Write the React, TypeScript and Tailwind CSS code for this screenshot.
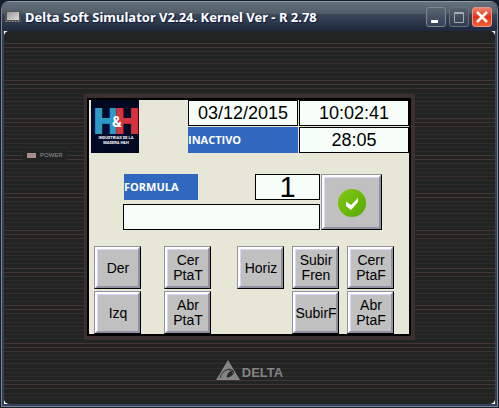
import type { ReactNode } from "react";

const stripes = [
  "bg-[#433635]", "bg-[#433635]", "bg-[#3a302e]", "bg-[#2c2b2a]", "bg-[#332c2b]",
  "bg-[#372e2c]", "bg-[#322c2a]", "bg-[#2c2b2a]", "bg-[#2d2b2b]",
];

function Stripes() {
  return (
    <div aria-hidden="true" className="absolute inset-x-0 top-3 bottom-1 overflow-hidden">
      {Array.from({ length: 90 }, (_, i) => (
        <div key={i} className={`h-px ${i % 6 === 5 ? "mb-1" : "mb-[3px]"} ${stripes[i % 9]}`} />
      ))}
    </div>
  );
}

function Key({ children, className = "" }: { children: ReactNode; className?: string }) {
  return (
    <button
      type="button"
      className={`flex shrink-0 border border-t-[#9292a0] border-l-[#9292a0] border-r-black border-b-black ${className}`}
    >
      <span className="flex grow self-stretch border-2 border-t-white border-l-white border-r-[#9090a2] border-b-[#9090a2]">
        <span className="flex w-0 grow items-center justify-center border-t border-l border-[#d6d6ff] bg-[#c0c0c0] text-center text-[14px] leading-[15px] whitespace-pre">
          {children}
        </span>
      </span>
    </button>
  );
}

function Logo() {
  return (
    <svg viewBox="0 0 48 53" className="h-[53px] w-12" role="img" aria-label="H&H">
      <defs>
        <radialGradient id="navy">
          <stop offset="0" stopColor="#02103a" />
          <stop offset="1" stopColor="#020820" />
        </radialGradient>
      </defs>
      <rect width="48" height="53" fill="url(#navy)" />
      <g fontFamily="Roboto, sans-serif" fontWeight="700" textAnchor="middle">
        <text x="15" y="33" fontSize="34" fill="#2d9ac8" stroke="#2d9ac8" strokeWidth="2">H</text>
        <text x="36" y="33" fontSize="34" fill="#d5333d" stroke="#d5333d" strokeWidth="2">H</text>
        <text x="26" y="27" fontSize="15" fill="#fff">&amp;</text>
        <text x="25" y="39" fontSize="4" fill="#fff">INDUSTRIAS DE LA</text>
        <text x="25" y="44" fontSize="4" fill="#fff">MADERA H&amp;H</text>
      </g>
    </svg>
  );
}

const frame = "h-[26px] border border-black bg-[#f7fdf8] text-center";
const label = "flex h-[26px] items-center bg-[#3068c0] text-[11px] font-bold text-white font-['Open_Sans',sans-serif]";

function Panel() {
  return (
    <section className="border-4 border-l-[3px] border-[#3b302f] bg-black p-[2px]">
      <div className="flex w-80 flex-col bg-[#e7e7d8] text-black">
        <header className="flex justify-between pl-[2px]">
          <Logo />
          <div className="grid grid-cols-[110px_110px] gap-px text-[18px] leading-6">
            <time className={frame}>03/12/2015</time>
            <time className={frame}>10:02:41</time>
            <div className={label}>INACTIVO</div>
            <output className={frame}>28:05</output>
          </div>
        </header>

        <form className="mt-[21px] mr-[27px] ml-[34px] flex gap-px">
          <div className="flex min-w-0 flex-1 flex-col gap-1">
            <div className="flex justify-between pl-px">
              <label htmlFor="formula" className={`${label} w-[74px]`}>FORMULA</label>
              <input id="formula" defaultValue="1" className={`${frame} w-[65px] text-[29px] leading-6`} />
            </div>
            <input aria-label="Nombre de la formula" className={`${frame} w-full`} />
          </div>
          <Key className="h-14 w-[61px]">
            <svg viewBox="0 0 28 28" className="size-7" role="img" aria-label="Aceptar">
              <defs>
                <linearGradient id="leaf" x2="1" y2="1">
                  <stop stopColor="#82c817" />
                  <stop offset="1" stopColor="#55aa00" />
                </linearGradient>
              </defs>
              <circle cx="14" cy="14" r="14" fill="url(#leaf)" />
              <path d="M8 12.500V17l5 4 7-8V9l-7 7z" fill="#fff" />
            </svg>
          </Key>
        </form>

        <div className="mt-4 ml-[5px] flex items-start">
          <div className="flex flex-col gap-[2px]">
            <Key className="h-[43px] w-[47px]">Der</Key>
            <Key className="h-[43px] w-[47px]">Izq</Key>
          </div>
          <div className="ml-[23px] flex flex-col gap-[2px]">
            <Key className="h-[43px] w-[47px]">{"Cer\nPtaT"}</Key>
            <Key className="h-[43px] w-[47px]">{"Abr\nPtaT"}</Key>
          </div>
          <Key className="ml-[26px] h-[43px] w-[47px]">Horiz</Key>
          <div className="ml-2 flex flex-col gap-[2px]">
            <Key className="h-[43px] w-[47px]">{"Subir\nFren"}</Key>
            <Key className="h-[43px] w-[47px]">SubirF</Key>
          </div>
          <div className="ml-2 flex flex-col gap-[2px]">
            <Key className="h-[43px] w-[47px]">{"Cerr\nPtaF"}</Key>
            <Key className="h-[43px] w-[47px]">{"Abr\nPtaF"}</Key>
          </div>
        </div>
      </div>
    </section>
  );
}

const control = "flex size-5 items-center justify-center rounded-[3px] border";

function TitleBar() {
  return (
    <header className="flex h-7 items-center gap-1 border-t border-[#8b97a3] bg-[linear-gradient(#65727e,#505c68_42%,#3c4858_46%,#202b42)] px-[3px] pt-[5px] pb-[3px]">
      <svg viewBox="0 0 16 12" className="h-3 w-4" aria-hidden="true">
        <defs>
          <linearGradient id="lcd" x2="1" y2="1">
            <stop stopColor="#999" />
            <stop offset="1" stopColor="#ddd" />
          </linearGradient>
        </defs>
        <rect width="16" height="11" fill="#55534f" />
        <rect x="2" y="1" width="12" height="8" fill="url(#lcd)" />
        <path d="M1 10.500H15" stroke="#aaa28f" strokeDasharray="1 2" />
      </svg>
      <h1 className="grow text-[13px] leading-5 font-bold whitespace-nowrap text-white [text-shadow:1px_1px_1px_#111a40] font-['Noto_Sans',sans-serif]">
        Delta Soft Simulator V2.24. Kernel Ver - R 2.78
      </h1>
      <div className="flex gap-[3px] pr-[2px]">
        <button type="button" aria-label="Minimizar" className={`${control} border-[#7d8792] bg-linear-to-b from-[#596570] to-[#34415a]`}>
          <svg viewBox="0 0 18 18" className="size-[18px]"><path d="M4 12h7v3H4z" fill="#fff" /></svg>
        </button>
        <button type="button" aria-label="Maximizar" className={`${control} border-[#65707d] bg-linear-to-b from-[#56616c] to-[#303b50]`}>
          <svg viewBox="0 0 18 18" className="size-[18px]" fill="none" stroke="#a6a9ad"><path d="M4.500 4.500h9v10h-9zM4 5.500h10" /></svg>
        </button>
        <button type="button" aria-label="Cerrar" className={`${control} border-[#e69788] bg-linear-to-b from-[#ed8068] via-[#e32c0c] to-[#f66038]`}>
          <svg viewBox="0 0 18 18" className="size-[18px]" stroke="#fff" strokeWidth="2.500"><path d="M4 4l10 10M14 4L4 14" /></svg>
        </button>
      </div>
    </header>
  );
}

function Brand() {
  return (
    <div className="flex items-end gap-[2px] text-[#858585]">
      <svg viewBox="0 0 24 20" className="h-5 w-6" aria-hidden="true">
        <path d="M12 0L24 20H0z" fill="currentColor" />
        <path d="M4 18Q6 10 14 9M13 10Q19 9 17 14Q15 17 11 17Q12 12 16 11" fill="none" stroke="#292b2b" />
        <path d="M12 13L17 10L16 15L11 18z" fill="#292b2b" />
      </svg>
      <span className="text-[13px] leading-[14px] font-black">DELTA</span>
    </div>
  );
}

export default function App() {
  return (
    <div className="min-h-screen bg-[#151f2d] font-['Liberation_Sans',Arial,sans-serif]">
      <main className="flex min-h-screen flex-col overflow-hidden rounded-t-lg border-x border-b border-[#151f2d] pt-px">
        <div className="flex grow flex-col overflow-hidden rounded-t-lg border-x border-b border-[#78838f]">
          <TitleBar />
          <div className="flex grow flex-col border-2 border-[#34415a] border-t-[#202b42] bg-white">
            <div className="relative flex grow flex-col items-center overflow-hidden rounded-[5px] bg-[#212423]">
              <Stripes />
              <div className="relative flex w-full grow items-start pt-[63px]">
                <div className="min-w-0 flex-1">
                  <div className="mt-14 ml-[19px] flex w-max items-center gap-1 bg-[#222423] px-1">
                    <span className="h-[5px] w-[9px] bg-[#ab8c8c]" />
                    <span className="text-[6px] leading-[10px] text-[#969696]">POWER</span>
                  </div>
                </div>
                <Panel />
                <div className="flex-1" />
              </div>
              <div className="relative pb-6"><Brand /></div>
            </div>
          </div>
        </div>
      </main>
    </div>
  );
}
